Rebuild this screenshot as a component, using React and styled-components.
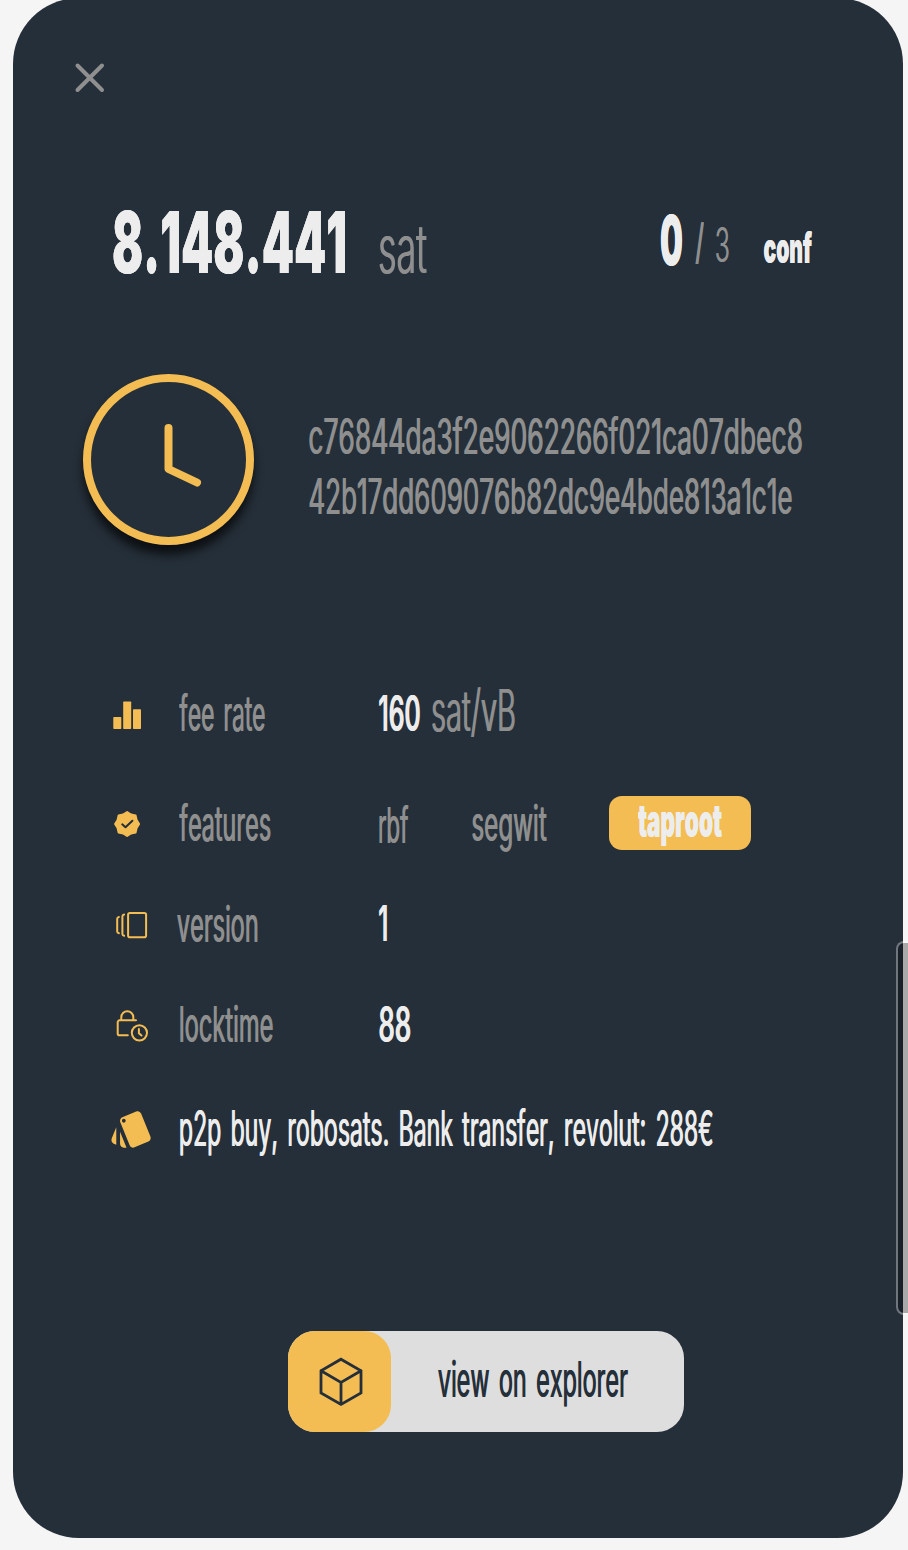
import React, { useMemo } from "react";
import styled, { createGlobalStyle } from "styled-components";

const color = {
  page: "#f5f5f5",
  card: "#252f39",
  accent: "#f4bd53",
  muted: "#8f8f8f",
  bright: "#ededed",
  button: "#dedede",
};

const FONT = 'Inter, "Liberation Sans", sans-serif';

const GlobalStyle = createGlobalStyle`
  body { margin: 0; background: ${color.page}; font-family: ${FONT}; }
  * { box-sizing: border-box; }
`;

/* ---- condensed text: squeezes a run of text to a given ink width ---- */

const TextBox = styled.span`
  display: block;
  flex: none;
  width: ${(p) => p.$w}px;
  height: ${(p) => p.$size * 0.727}px;
  line-height: ${(p) => p.$size * 0.727}px;
  margin: ${(p) => p.$mt || 0}px 0 0 ${(p) => p.$ml || 0}px;
  font-size: ${(p) => p.$size}px;
  font-weight: ${(p) => p.$weight};
  font-kerning: none;
  color: ${(p) => p.$color};
`;

/* the sideways shadow gives the stems back the weight that squeezing takes */
const Squeezed = styled.span`
  display: block;
  width: max-content;
  white-space: pre;
  word-spacing: ${(p) => p.$wordGap}px;
  transform-origin: 0 50%;
  text-shadow: ${(p) => p.$stem}px 0 currentColor;
`;

function measureInk(text, size, weight, wordGap) {
  const ctx = document.createElement("canvas").getContext("2d");
  ctx.font = `${weight} ${size}px ${FONT}`;
  ctx.fontKerning = "none";
  ctx.wordSpacing = `${wordGap}px`;
  const m = ctx.measureText(text);
  return { left: -m.actualBoundingBoxLeft, right: m.actualBoundingBoxRight };
}

function Text({ children, w, size = 49.5, weight = 400, stem = 1.6, tone = color.muted, ml, mt }) {
  const wordGap = size * 0.12;
  const transform = useMemo(() => {
    const ink = measureInk(children, size, weight, wordGap);
    const scale = w / (ink.right + stem - ink.left);
    return `translateX(${-ink.left * scale}px) scaleX(${scale})`;
  }, [children, w, size, weight, stem, wordGap]);
  return (
    <TextBox $w={w} $size={size} $weight={weight} $color={tone} $ml={ml} $mt={mt}>
      <Squeezed $stem={stem} $wordGap={wordGap} style={{ transform }}>{children}</Squeezed>
    </TextBox>
  );
}

/* ---- layout ---- */

const Screen = styled.div`
  position: relative;
  width: 908px;
  height: 1550px;
  overflow: hidden;
  background: ${color.page};
`;

const Card = styled.main`
  display: flex;
  flex-direction: column;
  width: 890px;
  height: 1540px;
  margin: -2px 0 0 13.3px;
  padding: 62px 0 0;
  border-radius: 66px;
  background: ${color.card};
`;

const CloseButton = styled.button`
  width: 36px;
  height: 36px;
  margin-left: 58.7px;
  padding: 0;
  border: 0;
  background: none;
`;

const AmountRow = styled.header`
  display: flex;
  align-items: flex-start;
  height: 75px;
  margin-top: 109px;
  padding-left: 99.7px;
`;

const TxRow = styled.section`
  display: flex;
  height: 171px;
  margin-top: 94px;
  padding-left: 69.7px;
`;

const ClockFace = styled.div`
  width: 171px;
  height: 171px;
  border: 8px solid ${color.accent};
  border-radius: 50%;
  box-shadow: 0 10px 10px rgba(0, 0, 0, 0.65);
`;

const TxId = styled.div`
  margin-left: 55px;
  padding-top: 44px;
`;

const Details = styled.section`
  display: flex;
  flex-direction: column;
  margin-top: 138px;
  padding-left: 94.7px;
`;

const Row = styled.div`
  display: flex;
  align-items: flex-start;
  height: 60px;
  margin-bottom: ${(p) => p.$gap || 0}px;
`;

const Label = styled.div`
  display: flex;
  width: 227px;
`;

const Icon = styled.svg`
  display: block;
  flex: none;
  width: ${(p) => p.$w || 44}px;
  height: ${(p) => p.$h || 60}px;
  fill: none;
  stroke-linecap: round;
  stroke-linejoin: ${(p) => p.$join || "round"};
`;

const Pill = styled.div`
  display: flex;
  justify-content: center;
  width: 142.5px;
  height: 54.5px;
  margin: 2.5px 0 0 61.3px;
  border-radius: 13px;
  background: ${color.accent};
`;

const ExplorerButton = styled.button`
  display: flex;
  width: 396px;
  height: 101px;
  margin: 174px 0 0 274.4px;
  padding: 0;
  border: 0;
  border-radius: 27px;
  background: ${color.button};
  font-family: inherit;
  text-align: left;
`;

const ExplorerTile = styled.span`
  display: block;
  width: 103.5px;
  height: 101px;
  border-radius: 27px;
  background: ${color.accent};
`;

const ScrollThumb = styled.div`
  position: absolute;
  top: 941px;
  left: 896px;
  width: 24px;
  height: 374px;
  border: 2px solid rgba(255, 255, 255, 0.34);
  border-radius: 8px;
  background: rgba(0, 0, 0, 0.31);
  background-clip: padding-box;
`;

/* ---- icons ---- */

const CloseIcon = () => (
  <Icon $w={36} $h={36} viewBox="0 0 36 36">
    <path d="M5.5 5.5l24.5 24.5M30 5.5L5.5 30" stroke={color.muted} strokeWidth="4" />
  </Icon>
);

const ClockHands = () => (
  <Icon $w={155} $h={155} viewBox="0 0 155 155">
    <path d="M77.5 46v41l28.5 13.5" stroke={color.accent} strokeWidth="8" />
  </Icon>
);

const BarsIcon = () => (
  <Icon viewBox="0 0 44 60">
    <g fill={color.accent}>
      <rect x="5.3" y="34" width="8" height="12" rx=".7" />
      <rect x="15.2" y="18.5" width="8" height="27.5" rx=".7" />
      <rect x="25" y="26.3" width="8" height="19.7" rx=".7" />
    </g>
  </Icon>
);

const scallop = Array.from({ length: 16 }, (_, i) => {
  const r = i % 2 ? 10.3 : 12;
  const a = (i * Math.PI) / 8;
  return `${19.1 + r * Math.sin(a)},${31 - r * Math.cos(a)}`;
}).join(" ");

const BadgeIcon = () => (
  <Icon viewBox="0 0 44 60">
    <polygon points={scallop} fill={color.accent} stroke={color.accent} strokeWidth="2" />
    <path d="M14.2 31.3l3.3 3 6.9-6.5" stroke={color.card} strokeWidth="2" />
  </Icon>
);

const VersionsIcon = () => (
  <Icon viewBox="0 0 44 60">
    <g stroke={color.accent} strokeWidth="2">
      <rect x="20.1" y="20" width="18" height="24.2" rx="1.8" />
      <path d="M16.1 21.6c-1.2.2-1.7.7-1.7 1.7v17.8c0 1 .5 1.5 1.7 1.7M10.9 24c-1.2.2-1.7.7-1.7 1.7v12.8c0 1 .5 1.5 1.7 1.7" />
    </g>
  </Icon>
);

const LockClockIcon = () => (
  <Icon viewBox="0 0 44 60">
    <g stroke={color.accent} strokeWidth="2">
      <path d="M28 27.3H11.6a1.9 1.9 0 0 0-1.9 1.9v11.2a1.9 1.9 0 0 0 1.9 1.9h8.2" />
      <path d="M13.3 27v-2.8a6 6 0 0 1 12 0V27" />
      <circle cx="31.4" cy="39.8" r="7.6" />
      <path d="M30.9 36v4.2l2.6 2.3" />
    </g>
  </Icon>
);

const CardsIcon = () => (
  <Icon viewBox="0 0 44 60">
    <path
      transform="translate(1 8.9) scale(1.88 1.92)"
      fill={color.accent}
      d="M2.53 19.65l1.34.56v-9.03l-2.43 5.86c-.41 1.02.08 2.19 1.09 2.61zm19.5-3.7L17.07 3.98c-.31-.75-1.04-1.21-1.81-1.23-.26 0-.53.04-.79.15L7.1 5.95c-.75.31-1.21 1.03-1.23 1.8-.01.27.04.54.15.8l4.96 11.97c.31.76 1.05 1.22 1.83 1.23.26 0 .52-.05.77-.15l7.36-3.05c1.02-.42 1.51-1.59 1.09-2.6zM7.88 8.75c-.55 0-1-.45-1-1s.45-1 1-1 1 .45 1 1-.45 1-1 1zm-2 11c0 1.1.9 2 2 2h1.45l-3.45-8.34v6.34z"
    />
  </Icon>
);

const CubeIcon = () => (
  <Icon $w={103.5} $h={101} $join="miter" viewBox="0 0 103.5 101">
    <path
      d="M53 28.2l20 11.6v22.2L53 73.4 33 62V39.8zM33 39.8l20 11.6 20-11.6M53 51.4v22"
      stroke={color.card}
      strokeWidth="2.8"
    />
  </Icon>
);

export default function App() {
  return (
    <Screen>
      <GlobalStyle />
      <Card>
        <CloseButton aria-label="Close">
          <CloseIcon />
        </CloseButton>

        <AmountRow>
          <Text w={232} size={85.5} weight={900} stem={0} tone={color.bright} mt={5.5}>8.148.441</Text>
          <Text w={48} size={67} weight={300} stem={2} ml={34} mt={20}>sat</Text>
          <Text w={21} size={69} weight={900} stem={0} tone={color.bright} ml={234} mt={10}>0</Text>
          <Text w={9} size={48} weight={500} stem={1} ml={13} mt={20}>/</Text>
          <Text w={13} size={48} weight={300} stem={1} ml={12} mt={22.5}>3</Text>
          <Text w={48} size={42} weight={900} stem={0} tone={color.bright} ml={35} mt={27.5}>conf</Text>
        </AmountRow>

        <TxRow>
          <ClockFace>
            <ClockHands />
          </ClockFace>
          <TxId>
            <Text w={493}>c76844da3f2e9062266f021ca07dbec8</Text>
            <Text w={483} mt={24}>42b17dd609076b82dc9e4bde813a1c1e</Text>
          </TxId>
        </TxRow>

        <Details>
          <Row $gap={50}>
            <BarsIcon />
            <Label>
              <Text w={86} ml={27} mt={12}>fee rate</Text>
            </Label>
            <Text w={41} weight={500} tone={color.bright} mt={12}>160</Text>
            <Text w={83} size={57} weight={300} stem={2} ml={12} mt={7}>sat/vB</Text>
          </Row>
          <Row $gap={40}>
            <BadgeIcon />
            <Label>
              <Text w={91.5} ml={27} mt={11.5}>features</Text>
            </Label>
            <Text w={29.5} ml={0.3} mt={13.5}>rbf</Text>
            <Text w={75} ml={63.5} mt={11.5}>segwit</Text>
            <Pill>
              <Text w={84} size={45} weight={900} stem={0} tone={color.bright} mt={9}>taproot</Text>
            </Pill>
          </Row>
          <Row $gap={40}>
            <VersionsIcon />
            <Label>
              <Text w={80.5} ml={25} mt={12.5}>version</Text>
            </Label>
            <Text w={8} weight={500} tone={color.bright} mt={12}>1</Text>
          </Row>
          <Row $gap={44}>
            <LockClockIcon />
            <Label>
              <Text w={93} ml={27.7} mt={12.8}>locktime</Text>
            </Label>
            <Text w={31.5} weight={500} tone={color.bright} mt={12.5}>88</Text>
          </Row>
          <Row>
            <CardsIcon />
            <Text w={533} tone={color.bright} ml={28} mt={12.5}>
              p2p buy, robosats. Bank transfer, revolut: 288€
            </Text>
          </Row>
        </Details>

        <ExplorerButton>
          <ExplorerTile>
            <CubeIcon />
          </ExplorerTile>
          <Text w={190} tone={color.card} ml={47} mt={29.5}>view on explorer</Text>
        </ExplorerButton>
      </Card>
      <ScrollThumb />
    </Screen>
  );
}
